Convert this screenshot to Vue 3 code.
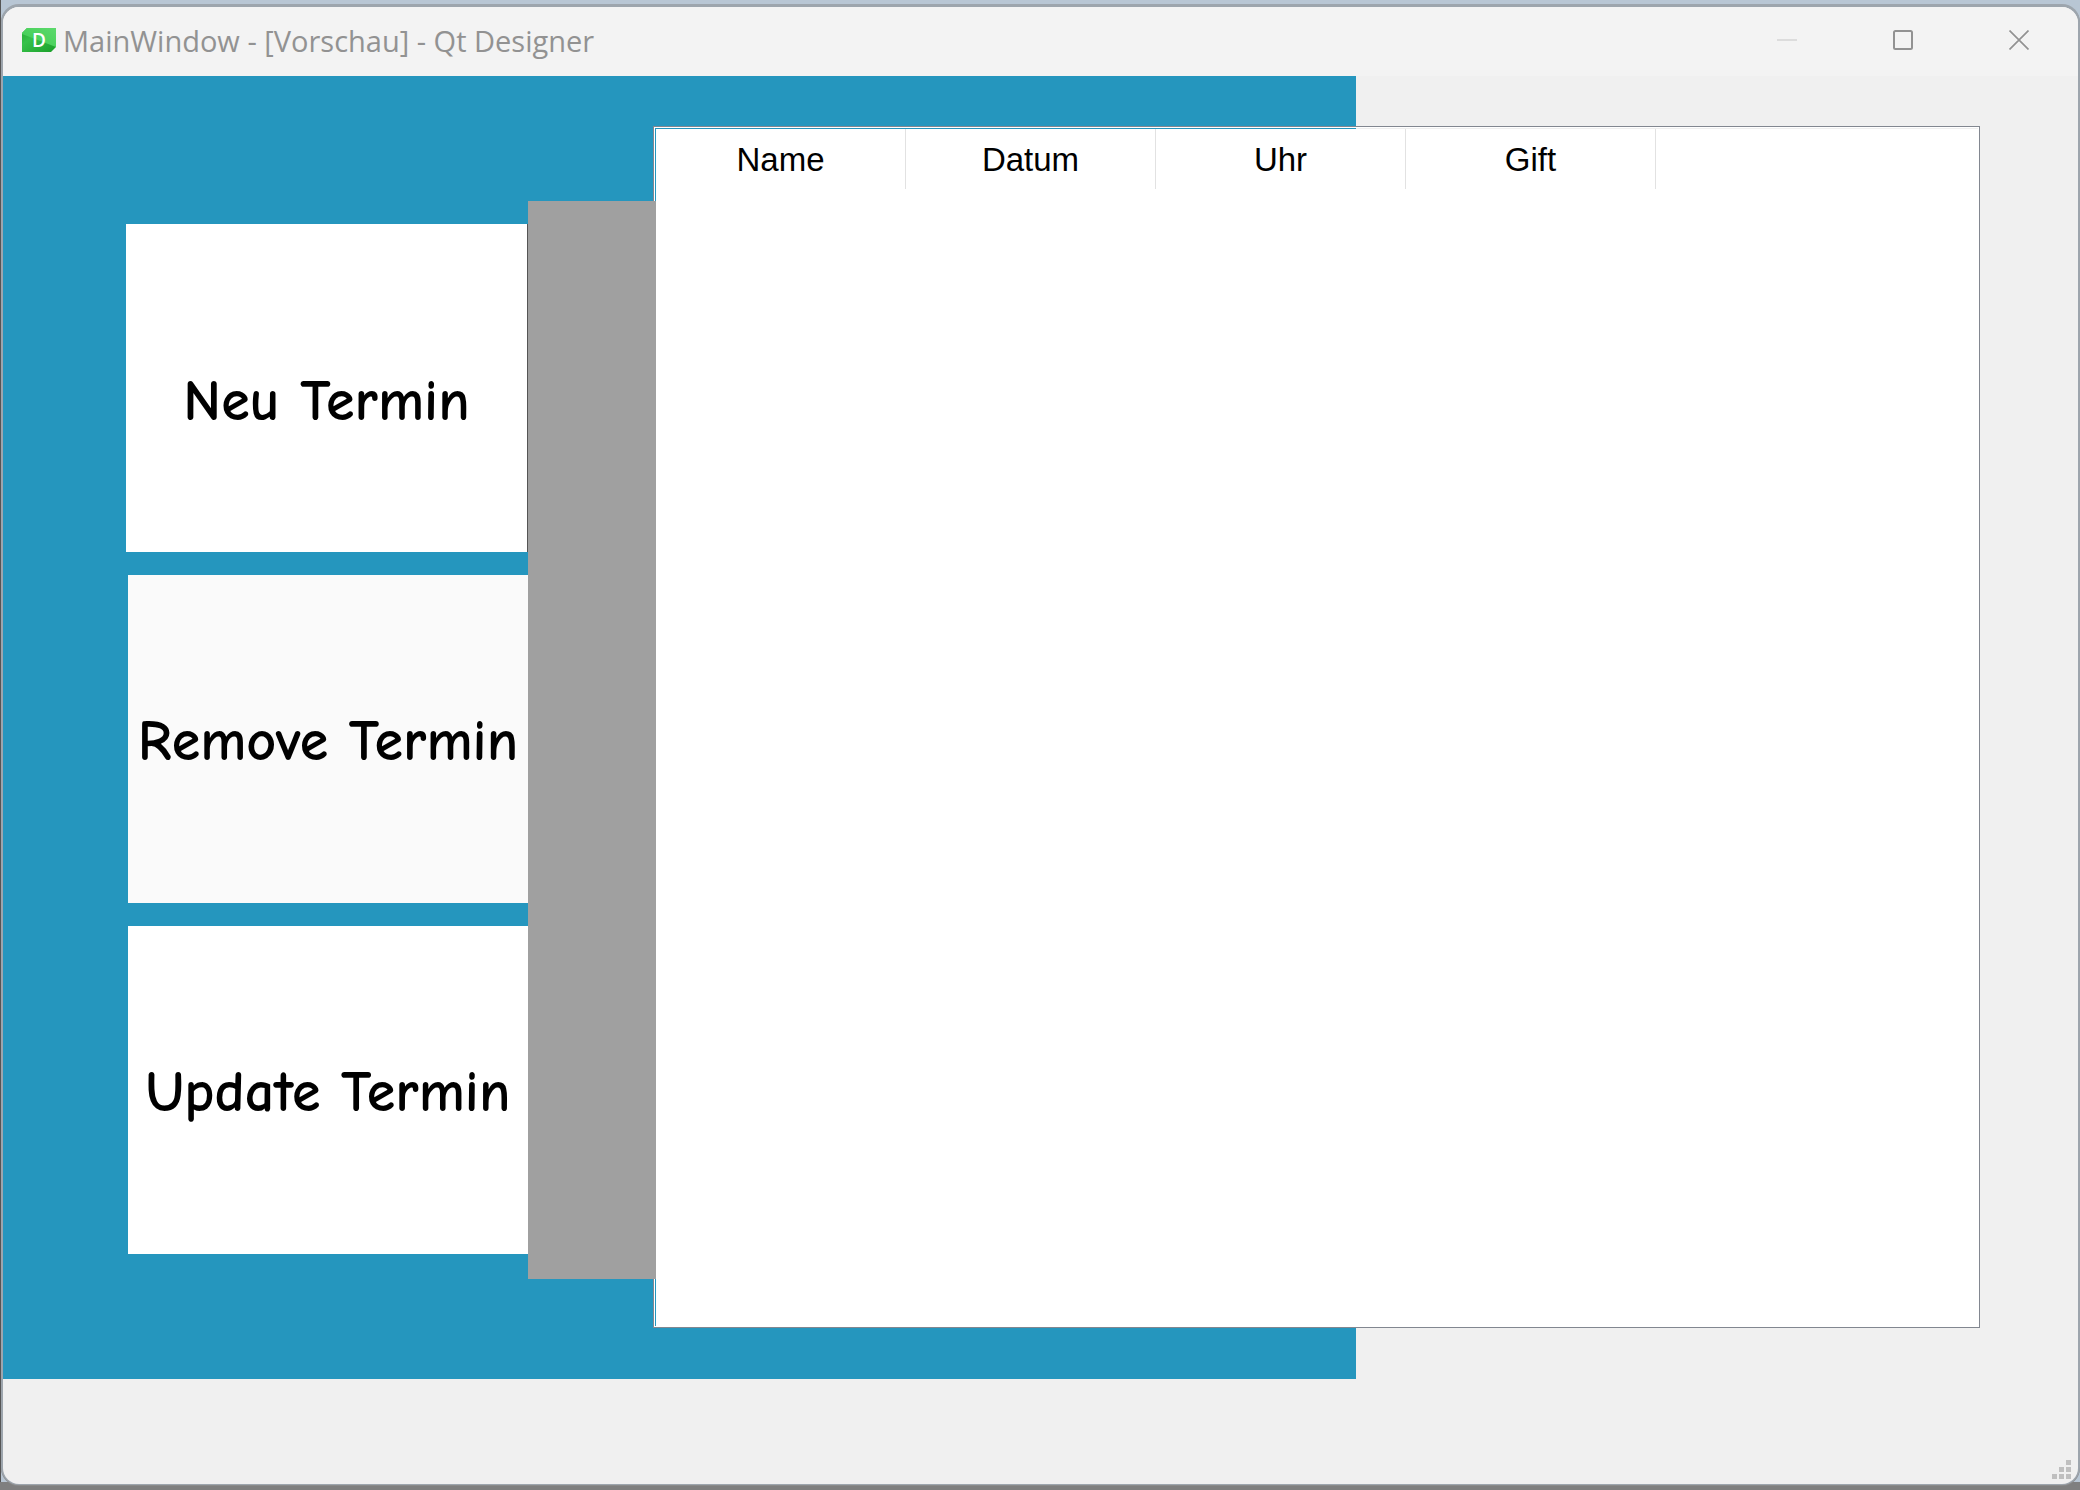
<script setup>
const actions = ['Neu Termin', 'Remove Termin', 'Update Termin']
const columns = ['Name', 'Datum', 'Uhr', 'Gift']
</script>

<template>
  <div class="desktop">
    <div class="window">
      <header class="titlebar">
        <svg class="logo" width="34" height="24" viewBox="0 0 34 24" aria-hidden="true">
          <defs>
            <linearGradient id="logo-dark" x1="0" y1="0" x2="1" y2="1">
              <stop offset="0" stop-color="#22a832" />
              <stop offset="0.35" stop-color="#36c149" />
              <stop offset="1" stop-color="#1a9e2a" />
            </linearGradient>
            <linearGradient id="logo-light" x1="0" y1="1" x2="1" y2="0">
              <stop offset="0" stop-color="#3dcb50" />
              <stop offset="1" stop-color="#5cd96c" />
            </linearGradient>
          </defs>
          <path d="M0 5 5 0H34V19L29 24H0Z" fill="url(#logo-dark)" />
          <path d="M0 5 5 0H34V19L0 6Z" fill="url(#logo-light)" />
          <text x="17" y="19" text-anchor="middle" class="logo-letter">D</text>
        </svg>
        <h1 class="title">MainWindow - [Vorschau] - Qt Designer</h1>
        <div class="caption-buttons">
          <button type="button" class="caption" aria-label="Minimieren" disabled>
            <svg width="20" height="20" viewBox="0 0 20 20"><path d="M0 10H20" stroke="#dcdcdc" stroke-width="2" /></svg>
          </button>
          <button type="button" class="caption" aria-label="Maximieren">
            <svg width="20" height="20" viewBox="0 0 20 20"><rect x="1" y="1" width="18" height="18" rx="1.5" fill="none" stroke="#929292" stroke-width="2" /></svg>
          </button>
          <button type="button" class="caption" aria-label="Schließen">
            <svg width="20" height="20" viewBox="0 0 20 20"><path d="M0.5 0.5 19.5 19.5M19.5 0.5 0.5 19.5" stroke="#929292" stroke-width="1.7" /></svg>
          </button>
        </div>
      </header>

      <main class="content">
        <div class="backdrop"></div>
        <nav class="actions">
          <button v-for="label in actions" :key="label" type="button" class="action">{{ label }}</button>
        </nav>
        <div class="divider"></div>
        <section class="list">
          <div class="list-inner">
            <table class="table">
              <thead>
                <tr>
                  <th v-for="name in columns" :key="name" scope="col">{{ name }}</th>
                  <td></td>
                </tr>
              </thead>
            </table>
          </div>
        </section>
        <footer class="statusbar">
          <svg width="19" height="19" viewBox="0 0 19 19" fill="#bfbfbf" aria-hidden="true">
            <path d="M14 0h5v5h-5zM7 7h5v5h-5zM14 7h5v5h-5zM0 14h5v5h-5zM7 14h5v5h-5zM14 14h5v5h-5z" />
          </svg>
        </footer>
      </main>
    </div>
  </div>
</template>

<style>
body {
  margin: 0;
}
</style>

<style scoped>
.desktop {
  box-sizing: border-box;
  display: flex;
  min-height: 100vh;
  padding: 7px 2px 6px 3px;
  background:
    linear-gradient(#7f7f7f, #7f7f7f) bottom / 100% 8px no-repeat,
    linear-gradient(#555, #555) left / 1px 100% no-repeat,
    #b8c6d4;
}

.window {
  flex: 1;
  display: flex;
  flex-direction: column;
  min-width: 0;
  overflow: hidden;
  border-radius: 16px;
  background: #f0f0f0;
  box-shadow: 0 -1px 0 2px #9da5ad, 0 0 0 2px #8a8a8a;
}

.titlebar {
  box-sizing: border-box;
  display: flex;
  align-items: center;
  height: 69px;
  padding: 0 1px 3px 19px;
  background: #f3f3f3;
}

.logo-letter {
  font: 600 19px "Open Sans", sans-serif;
  fill: #fff;
}

.title {
  flex: 1;
  margin: 0 0 0 7px;
  padding-top: 2px;
  font: 400 29px/40px "Segoe UI", "Open Sans", sans-serif;
  color: #929292;
  white-space: nowrap;
}

.caption-buttons {
  display: flex;
}

.caption {
  display: flex;
  align-items: center;
  justify-content: center;
  width: 116px;
  height: 60px;
  padding: 0;
  border: 0;
  background: none;
}

.content {
  flex: 1;
  display: grid;
  grid-template-columns: 525px 125px 703fr 624fr 98px;
  grid-template-rows: 50px 1fr 51px 105px;
}

.backdrop {
  grid-area: 1 / 1 / 4 / 4;
  background: #2596be;
}

.actions {
  grid-area: 2 / 1;
  display: grid;
  grid-auto-rows: 1fr;
  gap: 23px;
  padding: 98px 0 74px 125px;
}

.action {
  padding: 6px 0 0;
  border: 0;
  background: #fff;
  color: #000;
  font: 700 58px/76px "Comic Sans MS", "Comic Neue", "Open Sans", sans-serif;
  white-space: nowrap;
}

.action:first-child {
  margin-left: -2px;
  padding-top: 28px;
  border-right: 1px solid #555;
}

.action:nth-child(2) {
  background: #fafafa;
}

.divider {
  grid-area: 2 / 2;
  z-index: 1;
  margin: 75px -3px 49px 0;
  background: #a0a0a0;
}

.list {
  grid-area: 2 / 3 / 3 / 5;
  display: flex;
  padding: 1px;
  border: 1px solid #828790;
  background: #fff;
}

.list-inner {
  flex: 1;
  padding: 1px 0 0 1px;
  background: linear-gradient(to right, #2596be 53%, #efefef 53%);
  display: flex;
  flex-direction: column;
}

.list-inner::after {
  content: "";
  flex: 1;
  background: #fff;
}

.table {
  width: 100%;
  table-layout: fixed;
  border-collapse: separate;
  border-spacing: 0;
  background: #fff;
}

.table th {
  box-sizing: border-box;
  width: 250px;
  height: 60px;
  padding: 2px 0 0;
  border-right: 1px solid #e2e2e2;
  font: 400 33px/38px Arial, "Liberation Sans", sans-serif;
  color: #000;
}

.statusbar {
  grid-area: 4 / 1 / 5 / 6;
  display: flex;
  align-items: flex-end;
  justify-content: flex-end;
  padding: 0 7px 5px 0;
}
</style>
